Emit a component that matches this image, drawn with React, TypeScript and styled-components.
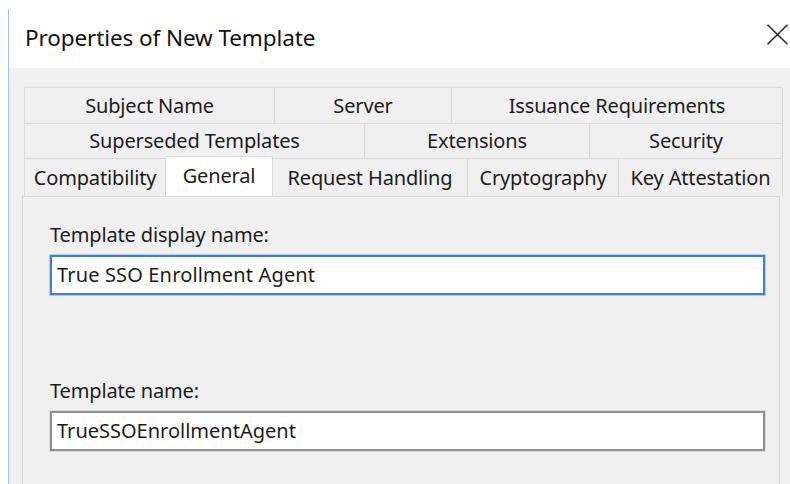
import React from "react";
import styled, { createGlobalStyle } from "styled-components";

const GlobalStyle = createGlobalStyle`
  html, body {
    margin: 0;
    padding: 0;
    background: #ffffff;
    overflow: hidden;
  }
  body {
    font-family: "Noto Sans", "Open Sans", sans-serif;
    color: #1b1b1b;
  }
`;

const Page = styled.div`
  width: 790px;
  height: 484px;
  padding: 9px 0 0 8px;
  box-sizing: border-box;
  overflow: hidden;
`;

const Window = styled.div`
  width: 800px;
  height: 500px;
  border-left: 1px solid #9fc2e7;
  display: flex;
  flex-direction: column;
  background: #f0f0f0;
`;

const TitleBar = styled.div`
  height: 59px;
  flex: none;
  background: #ffffff;
  display: flex;
  align-items: center;
  justify-content: space-between;
  padding: 0 0 0 16px;
  width: 781px;
  box-sizing: border-box;
`;

const Title = styled.div`
  font-size: 22.5px;
  color: #111;
  letter-spacing: -0.1px;
  padding-bottom: 3px;
`;

const CloseButton = styled.div`
  width: 24px;
  height: 24px;
  display: flex;
  align-items: center;
  justify-content: center;
  margin-right: 1px;
  margin-bottom: 8px;
`;

const Body = styled.div`
  flex: 1;
  padding: 19px 0 0 15px;
  display: flex;
  flex-direction: column;
`;

const TabStrip = styled.div`
  width: 759px;
  display: flex;
  flex-direction: column;
`;

const TabRow = styled.div<{ $h: number }>`
  display: flex;
  height: ${(p) => p.$h}px;
  align-items: flex-end;
`;

const Tab = styled.div<{ $w: number; $selected?: boolean; $first?: boolean }>`
  width: ${(p) => p.$w}px;
  flex: none;
  box-sizing: border-box;
  height: ${(p) => (p.$selected ? "calc(100% + 2px)" : "100%")};
  margin-top: ${(p) => (p.$selected ? "-2px" : "0")};
  background: ${(p) => (p.$selected ? "#ffffff" : "#f0f0f0")};
  border-top: 1px solid #dadada;
  border-left: ${(p) => (p.$first ? "1px solid #dadada" : "none")};
  border-right: 1px solid #dadada;
  display: flex;
  align-items: ${(p) => (p.$selected ? "flex-start" : "center")};
  padding-top: ${(p) => (p.$selected ? "5px" : "0")};
  padding-bottom: ${(p) => (p.$selected ? "0" : "1px")};
  justify-content: center;
  font-size: 20px;
  letter-spacing: -0.15px;
  color: #1b1b1b;
  white-space: nowrap;
`;

const Panel = styled.div`
  margin-left: -2px;
  width: 758px;
  flex: 1;
  box-sizing: border-box;
  border-left: 1px solid #d9d9d9;
  border-right: 1px solid #d9d9d9;
  border-top: 1px solid #d9d9d9;
  background: #f0f0f0;
  padding: 24px 0 0 27px;
  display: flex;
  flex-direction: column;
`;

const Field = styled.div<{ $gap: number }>`
  display: flex;
  flex-direction: column;
  margin-bottom: ${(p) => p.$gap}px;
`;

const Label = styled.div`
  font-size: 20px;
  letter-spacing: -0.15px;
  color: #1b1b1b;
  height: 28px;
  line-height: 28px;
  margin-bottom: 6px;
`;

const TextBox = styled.div<{ $focused?: boolean; $spacing: number }>`
  width: 715px;
  height: 40px;
  box-sizing: border-box;
  background: #ffffff;
  border: 2px solid ${(p) => (p.$focused ? "#3f7fdc" : "#8f8f8f")};
  box-shadow: ${(p) =>
    p.$focused ? "0 0 0 1px rgba(120,165,230,0.45)" : "0 0 0 1px rgba(180,180,180,0.35)"};
  display: flex;
  align-items: center;
  padding: 0 0 2px 5px;
  font-size: 20px;
  letter-spacing: ${(p) => p.$spacing}px;
  color: #1b1b1b;
  white-space: nowrap;
`;

type TabDef = { label: string; w: number; selected?: boolean };

const rows: { h: number; tabs: TabDef[] }[] = [
  {
    h: 36,
    tabs: [
      { label: "Subject Name", w: 251 },
      { label: "Server", w: 177 },
      { label: "Issuance Requirements", w: 331 },
    ],
  },
  {
    h: 35,
    tabs: [
      { label: "Superseded Templates", w: 341 },
      { label: "Extensions", w: 225 },
      { label: "Security", w: 193 },
    ],
  },
  {
    h: 38,
    tabs: [
      { label: "Compatibility", w: 142 },
      { label: "General", w: 107, selected: true },
      { label: "Request Handling", w: 195 },
      { label: "Cryptography", w: 151 },
      { label: "Key Attestation", w: 164 },
    ],
  },
];

export default function App() {
  return (
    <>
      <GlobalStyle />
      <Page>
        <Window>
          <TitleBar>
            <Title>Properties of New Template</Title>
            <CloseButton>
              <svg width="23" height="21" viewBox="0 0 23 21">
                <path d="M1.5 0.8 L21.5 20.2 M21.5 0.8 L1.5 20.2" stroke="#2b2b2b" strokeWidth="1.6" />
              </svg>
            </CloseButton>
          </TitleBar>
          <Body>
            <TabStrip>
              {rows.map((row, ri) => (
                <TabRow key={ri} $h={row.h}>
                  {row.tabs.map((t, ti) => (
                    <Tab key={t.label} $w={t.w} $selected={t.selected} $first={ti === 0}>
                      {t.label}
                    </Tab>
                  ))}
                </TabRow>
              ))}
            </TabStrip>
            <Panel>
              <Field $gap={82}>
                <Label>Template display name:</Label>
                <TextBox $focused $spacing={0.15}>True SSO Enrollment Agent</TextBox>
              </Field>
              <Field $gap={0}>
                <Label>Template name:</Label>
                <TextBox $spacing={0}>TrueSSOEnrollmentAgent</TextBox>
              </Field>
            </Panel>
          </Body>
        </Window>
      </Page>
    </>
  );
}
